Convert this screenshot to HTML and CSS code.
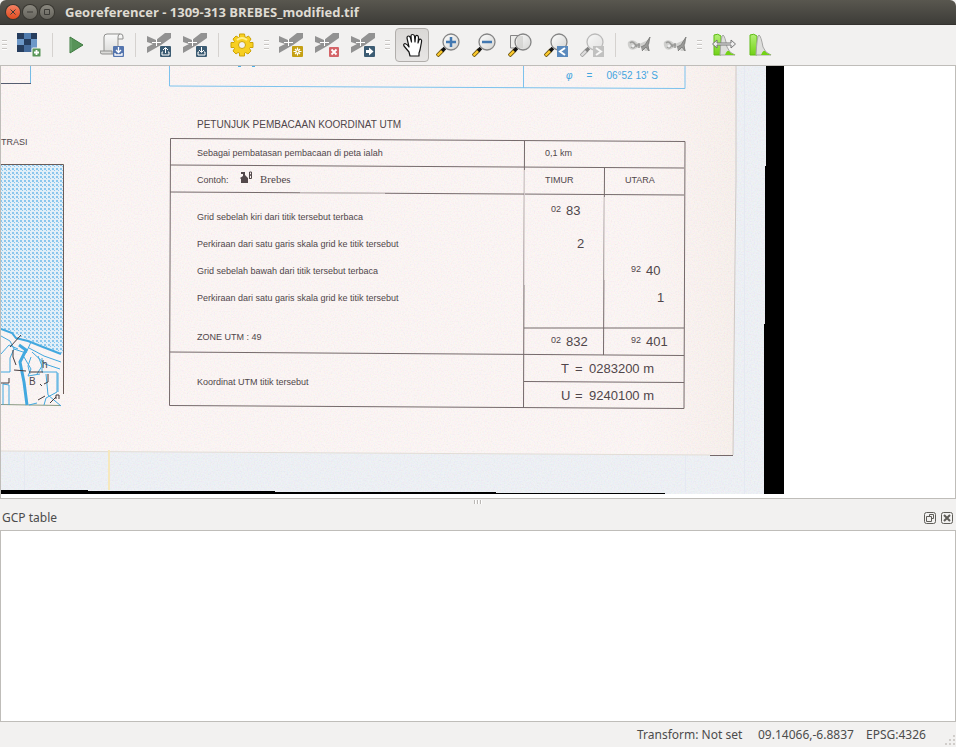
FILE: index.html
```html
<!DOCTYPE html>
<html lang="en">
<head>
<meta charset="utf-8">
<title>Georeferencer - 1309-313 BREBES_modified.tif</title>
<link rel="stylesheet" href="styles.css">
</head>
<body>
<svg class="defs" aria-hidden="true">
  <defs>
    <linearGradient id="lens" x1="0" y1="0" x2="1" y2="1"><stop offset="0" stop-color="#fff"/><stop offset="1" stop-color="#d3d3d1"/></linearGradient>
    <linearGradient id="sheetg" x1="0" y1="0" x2="0" y2="1"><stop offset="0" stop-color="#fafafa"/><stop offset="1" stop-color="#d8d8d6"/></linearGradient>
    <linearGradient id="greeng" x1="0" y1="0" x2="0" y2="1"><stop offset="0" stop-color="#b4f078"/><stop offset="1" stop-color="#73d216"/></linearGradient>
    <symbol id="point" viewBox="0 0 24 24">
      <path d="M0 3L9 7L18 0H24V5L14 12L0 20V14L6 11L0 9Z" fill="#929292"/>
      <path d="M5 9.500H14M9.500 6V13" stroke="#fff" stroke-width="1"/>
    </symbol>
    <symbol id="magnifier" viewBox="0 0 24 24">
      <path d="M1 23L7 17" stroke="#6b5514" stroke-width="4"/>
      <path d="M1.500 22.500L7 17" stroke="#fcca2c" stroke-width="2.400"/>
      <path d="M6 18L9 15" stroke="#111" stroke-width="3.500"/>
      <circle cx="15" cy="9" r="8" fill="url(#lens)" stroke="#858585" stroke-width="1.300"/>
    </symbol>
    <symbol id="linked" viewBox="0 0 24 24">
      <path d="M1 9Q4 6 8 8L12 11L19 8L23 5V10L21 13L23 18H18L15 14L10 15Q6 18 3 16Q0 13 1 9Z" fill="#cfcfcd"/>
      <path d="M3 10Q5 8 7 10T10 14M4 14Q7 16 9 12L13 12M12 10V15" fill="none" stroke="#9a9a98" stroke-width="1.500"/>
      <path d="M14 14L18 12L23 4L21 12L22 18L19 14L15 18" fill="#9a9a98" stroke="#838381"/>
      <circle cx="6" cy="13" r="1.500" fill="#eee"/>
    </symbol>
    <symbol id="histogram" viewBox="0 0 24 24">
      <path d="M2 22V2Q6 0 9 3V22Z" fill="url(#greeng)" stroke="#5ebb14"/>
      <path d="M8 22Q9 2 11 2Q13 3 15 14Q17 20 23 22Z" fill="#dededc" stroke="#a6a6a4"/>
      <path d="M13 22Q15 17 17 18Q19 21 24 22Z" fill="#73d216"/>
    </symbol>
  </defs>
</svg>

<div class="window">
  <header class="titlebar">
    <button class="wm close" aria-label="Close"><svg viewBox="0 0 14 14"><path d="M4.500 4.500L9.500 9.500M9.500 4.500L4.500 9.500"/></svg></button>
    <button class="wm" aria-label="Minimize"><svg viewBox="0 0 14 14"><path d="M4 7H10"/></svg></button>
    <button class="wm" aria-label="Maximize"><svg viewBox="0 0 14 14"><path d="M4.500 4.500H9.500V9.500H4.500Z"/></svg></button>
    <h1>Georeferencer - 1309-313 BREBES_modified.tif</h1>
  </header>

  <div class="toolbar" role="toolbar" aria-label="Georeferencer tools">
    <i class="handle"></i>
    <button class="tool" aria-label="Open raster"><svg viewBox="0 0 24 24">
      <path d="M0 0H20V19H0Z" fill="#6d98c8"/><path d="M0 0H7V6H0ZM14 0H20V6H14ZM7 6H14V12H7ZM0 12H7V19H0Z" fill="#263d5e"/><path d="M7 12H14V19H7Z" fill="#456b9b"/><path d="M7 0H14V6H7Z" fill="#507caf"/>
      <rect x="15" y="15" width="9" height="9" rx="1" fill="#599658" stroke="#f2f1f0"/><path d="M19.500 17V22M17 19.500H22" stroke="#fff" stroke-width="1.800"/></svg></button>
    <i class="sep"></i>
    <button class="tool" aria-label="Start georeferencing"><svg viewBox="0 0 24 24"><path d="M6 4L19 12L6 20Z" fill="#579358" stroke="#3f7b41" stroke-linejoin="round"/><path d="M7 5.500V18.500" stroke="#77ae78"/></svg></button>
    <button class="tool" aria-label="Generate GDAL script"><svg viewBox="0 0 24 24">
      <path d="M4 18V4Q4 1 7 1H21Q23 1 23 4V6H18V18Q18 21 15 21H2Q0 21 0 18H12V21" fill="url(#sheetg)" stroke="#8f8f8d"/><path d="M18 6V4Q18 1 20 1" fill="none" stroke="#8f8f8d"/>
      <rect x="13" y="13" width="11" height="11" rx="1" fill="#5475ae"/><path d="M18.500 14V19M16 17L18.500 19.500L21 17M15 20V22H22V20" fill="none" stroke="#fff" stroke-width="1.300"/></svg></button>
    <i class="sep"></i>
    <button class="tool" aria-label="Load GCP points"><svg viewBox="0 0 24 24"><use href="#point"/><rect x="13" y="13" width="11" height="11" rx="1" fill="#3c5c73"/><path d="M18.500 20V15M16 17L18.500 14.500L21 17M16 19H15V22H22V19H21" fill="none" stroke="#fff" stroke-width="1"/></svg></button>
    <button class="tool" aria-label="Save GCP points"><svg viewBox="0 0 24 24"><use href="#point"/><rect x="13" y="13" width="11" height="11" rx="1" fill="#3c5c73"/><path d="M18.500 14V19M16 17L18.500 19.500L21 17M16 19H15V22H22V19H21" fill="none" stroke="#fff" stroke-width="1"/></svg></button>
    <i class="sep"></i>
    <button class="tool" aria-label="Transformation settings"><svg viewBox="0 0 24 24">
      <path fill-rule="evenodd" d="M9.500 1H14.500L15 4L16 4.500L18.500 3L21 6L19.500 8.500L20 9.500H23V14.500H20L19.500 15.500L21 18L18 21L15.500 19.500L14.500 20V23H9.500V20L8 19.500L6 21L3 18L4.500 15.500L4 14.500H1V9.500H4L4.500 8.500L3 6L6 3L8.500 4.500L9.500 4Z M12 8.500A3.500 3.500 0 1 0 12 15.500A3.500 3.500 0 1 0 12 8.500Z" fill="#f7cf20" stroke="#cda306"/><path d="M7 7Q12 3 17 7" stroke="#fff08b" fill="none" stroke-width="2"/></svg></button>
    <i class="handle"></i>
    <button class="tool" aria-label="Add point"><svg viewBox="0 0 24 24"><use href="#point"/><rect x="13" y="13" width="11" height="11" rx="1" fill="#c5a013"/><path d="M18.500 14.500V22.500M14.500 18.500H22.500M16 16L21 21M21 16L16 21" stroke="#fff" stroke-width="1.200"/><circle cx="18.500" cy="18.500" r="2" fill="#fff"/><circle cx="18.500" cy="18.500" r="1" fill="#c5a013"/></svg></button>
    <button class="tool" aria-label="Delete point"><svg viewBox="0 0 24 24"><use href="#point"/><rect x="14" y="14" width="10" height="10" rx="1" fill="#d46468"/><path d="M16.500 16.500L21.500 21.500M21.500 16.500L16.500 21.500" stroke="#fff" stroke-width="1.800"/></svg></button>
    <button class="tool" aria-label="Move GCP point"><svg viewBox="0 0 24 24"><use href="#point"/><rect x="13" y="13" width="11" height="11" rx="1" fill="#3c5c73"/><path d="M15 17H18V14.500L22.500 18.500L18 22.500V20H15Z" fill="#fff"/></svg></button>
    <i class="handle"></i>
    <button class="tool pressed" aria-label="Pan" aria-pressed="true"><svg viewBox="0 0 24 24">
      <path d="M10 23L9 19L4 13Q3 11 5 10.500Q7 11 9 14L7 5Q7 3 8.500 3Q10 3 10.500 5L11.500 9L11 3Q11 1.500 12.500 1.500Q14 1.500 14.500 3L15 9L15.500 3.500Q16 2 17.500 2.500Q18.500 3 18.500 5L18 10L19 7Q20 5.500 21 6.500Q22 7 21.500 9L20 17L19 20V23Z" fill="#fff" stroke="#151515" stroke-width="1.200" stroke-linejoin="round"/></svg></button>
    <button class="tool" aria-label="Zoom in"><svg viewBox="0 0 24 24"><use href="#magnifier"/><path d="M15 4V14M10 9H20" stroke="#4278b1" stroke-width="2.500"/></svg></button>
    <button class="tool" aria-label="Zoom out"><svg viewBox="0 0 24 24"><use href="#magnifier"/><path d="M10 9H20" stroke="#4278b1" stroke-width="2.500"/></svg></button>
    <button class="tool" aria-label="Zoom to layer"><svg viewBox="0 0 24 24"><path d="M2.500 2.500H15V15H2.500Z" fill="#ededeb" stroke="#858585"/><use href="#magnifier"/><path d="M15 3V15H10Q7 9 10 3Z" fill="#c9c9c7" opacity=".6"/></svg></button>
    <button class="tool" aria-label="Zoom last"><svg viewBox="0 0 24 24"><use href="#magnifier"/><rect x="13" y="13" width="11" height="11" fill="#5b8abd"/><path d="M21 15L16 18.500L21 22" fill="none" stroke="#fff" stroke-width="2"/></svg></button>
    <button class="tool" aria-label="Zoom next" disabled><svg class="faded" viewBox="0 0 24 24"><use href="#magnifier"/><rect x="13" y="13" width="11" height="11" fill="#929292"/><path d="M16 15L21 18.500L16 22" fill="none" stroke="#fff" stroke-width="2"/></svg></button>
    <i class="sep"></i>
    <button class="tool" aria-label="Link georeferencer to QGIS" disabled><svg viewBox="0 0 24 24"><use href="#linked"/></svg></button>
    <button class="tool" aria-label="Link QGIS to georeferencer" disabled><svg viewBox="0 0 24 24"><use href="#linked"/></svg></button>
    <i class="handle"></i>
    <button class="tool" aria-label="Full histogram stretch"><svg viewBox="0 0 24 24"><use href="#histogram"/><path d="M.5 11L5 7V10H19V7L23.500 11L19 15V12H5V15Z" fill="#eee" stroke="#777"/></svg></button>
    <button class="tool" aria-label="Local histogram stretch"><svg viewBox="0 0 24 24"><use href="#histogram"/></svg></button>
  </div>

  <main class="canvas">
    <div class="sheet">
      <svg class="scan" viewBox="1 66 783 428" role="img" aria-label="Scanned map sheet">
        <defs>
          <pattern id="dots" width="4" height="4" patternUnits="userSpaceOnUse"><rect width="4" height="4" fill="#e2eff8"/><path d="M0 0H2V2H0ZM2 2H3V3H2Z" fill="#8ac6ed"/></pattern>
          <linearGradient id="edge"><stop offset="0" stop-color="#f8efec" stop-opacity="0"/><stop offset="1" stop-color="#f7efeb"/></linearGradient>
          <filter id="grain" x="0" y="0" width="1" height="1" color-interpolation-filters="sRGB"><feTurbulence type="fractalNoise" baseFrequency=".7" numOctaves="2" seed="4"/><feColorMatrix values="1 0 0 0 .4 0 1 0 0 .4 0 0 1 0 .4 0 0 0 0 .1"/></filter>
        </defs>
        <rect x="1" y="66" width="783" height="428" fill="#edf0f5"/>
        <path d="M1 66H736L733 455L1 451Z" fill="#fcf5f4"/>
        <path d="M640 66H736L733 455H640Z" fill="url(#edge)"/>
        <rect x="1" y="66" width="783" height="428" filter="url(#grain)"/>
        <path d="M736 66V180L735 260L733 455" fill="none" stroke="#cfc8c4"/>
        <path d="M1 451L710 455" stroke="#e2ddd6"/><path d="M710 455.500H733" stroke="#75686a"/>
        <path d="M109 450V490" stroke="#f6e8bd" stroke-width="2"/><path d="M24.500 452V490M685.500 456V492M744.500 66V494" stroke="#e5e9f2"/>
        <path d="M766 66H784V494H764V324H765V166H766Z"/>
        <path d="M1 490H88V491H275V492H496V493H665V494H1Z"/>
        <path d="M1 83.500H31" stroke="#555d70"/><path d="M30.500 66V83" stroke="#75bce6"/>
        <path d="M169.500 66V86L685 88.500V66M523.500 66V88" fill="none" stroke="#7cc2ed"/>
        <path d="M238 66H241M252 66H255" stroke="#4baee8" stroke-width="2"/>
        <g fill="none" stroke="#756a6b">
          <path d="M170.500 138.500L685 141.500L684 408.500L169.500 405.500Z"/>
          <path d="M170 165L684 168M170 192L684 195M170 352L684 355.500M524 328H684M524 381.500L684 382.500"/>
          <path d="M524.500 141L523.500 408M604.500 168L603.500 355"/>
        </g>
        <g stroke="#fcf5f4" opacity=".65"><path d="M524.500 170V285M604.500 197V280M300 192.800L385 193.300"/></g>
        <path d="M1 164.500H63.500V354L1 329Z" fill="url(#dots)"/>
        <path d="M1 164.500H63.500V394" fill="none" stroke="#6b5c58"/><path d="M1 404.500L61 405.500" stroke="#8a9a83"/>
        <g fill="none" stroke="#42a8df">
          <path d="M1 329L12 333L16 338L28 341L43 347L61 354" stroke-width="2"/>
          <path d="M1 336L10 341L14 349L26 353L31 342M1 354L9 345L18 349M29 348L44 356L61 362M32 352L45 364L60 369"/>
          <path d="M19 345L26 350L20 362L24 382L27 405" stroke-width="3"/>
          <path d="M1 372H10V358L14 349M3 405V384L9 385V405M24 357L31 369L28 376L40 374M42 358V372H57V392L46 398L44 405M46 374L48 395L61 406M58 373V392M29 405L37 403M31 357L28 366L30 374M38 356L42 366L37 374"/>
        </g>
        <g fill="none" stroke="#453b3d"><path d="M10 347L21 335M13 350V357L16 365M14 370L26 371M29 372H43M1 383H9V378M40 384L42 386M48 374V382L44 384M38 400L45 396M50 403L56 397M56 399V395H59V399"/></g>
      </svg>
      <span class="print region">TRASI</span>
      <span class="print letter-b">B</span>
      <span class="print letter-h">h</span>
      <div class="latitude print"><i>φ</i><span>=</span><span>06°52 13' S</span></div>
      <table class="print">
        <caption>PETUNJUK PEMBACAAN KOORDINAT UTM</caption>
        <colgroup><col class="label-col"><col class="value-col"><col class="value-col"></colgroup>
        <tbody>
          <tr class="line"><td>Sebagai pembatasan pembacaan di peta ialah</td><td class="head" colspan="2">0,1 km</td></tr>
          <tr class="line"><td>Contoh: <svg class="village" viewBox="0 0 12 13"><path d="M0 7L3 5V3H1V1H5V4L8 7V12H1V8Z" fill="#53494b"/><path d="M9.500 8V1H11.500V4H9.500M9.500 4H11.500V7.500H9.500" fill="none" stroke="#53494b"/></svg><span class="place">Brebes</span></td><td class="head">TIMUR</td><td class="head">UTARA</td></tr>
          <tr class="first"><td>Grid sebelah kiri dari titik tersebut terbaca</td><td class="num raised"><sup>02</sup>83</td><td></td></tr>
          <tr class="line"><td>Perkiraan dari satu garis skala grid ke titik tersebut</td><td class="num unit">2</td><td></td></tr>
          <tr class="line"><td>Grid sebelah bawah dari titik tersebut terbaca</td><td></td><td class="num"><sup>92</sup>40</td></tr>
          <tr class="line"><td>Perkiraan dari satu garis skala grid ke titik tersebut</td><td></td><td class="num unit">1</td></tr>
          <tr class="zone"><td>ZONE UTM : 49</td><td class="num low"><sup>02</sup>832</td><td class="num low"><sup>92</sup>401</td></tr>
          <tr class="line"><td rowspan="2">Koordinat UTM titik tersebut</td><td class="sum" colspan="2"><b>T</b><b>=</b>0283200 m</td></tr>
          <tr class="line"><td class="sum" colspan="2"><b>U</b><b>=</b>9240100 m</td></tr>
        </tbody>
      </table>
    </div>
  </main>

  <div class="splitter"><i></i></div>

  <section class="dock">
    <header>
      <h2>GCP table</h2>
      <button aria-label="Float panel"><svg viewBox="0 0 12 12"><rect x=".5" y=".5" width="11" height="11" rx="2"/><path d="M5.500 4.500V2.500H9.500V6.500H7.500M2.500 4.500H7.500V9.500H2.500Z"/></svg></button>
      <button aria-label="Close panel"><svg viewBox="0 0 12 12"><rect x=".5" y=".5" width="11" height="11" rx="2"/><path class="cross" d="M3 3L9 9M9 3L3 9"/></svg></button>
    </header>
    <div class="gcp-list"></div>
  </section>

  <footer class="status">
    <span class="transform">Transform: Not set</span>
    <span class="coords">09.14066,-6.8837</span>
    <span class="crs">EPSG:4326</span>
    <svg class="grip" viewBox="0 0 12 12"><path d="M10 0h2v2h-2zM6 4h2v2h-2zM10 4h2v2h-2zM2 8h2v2h-2zM6 8h2v2h-2zM10 8h2v2h-2z"/></svg>
  </footer>
</div>
</body>
</html>
```

FILE: styles.css
```css
* { box-sizing: border-box; }

body {
  margin: 0;
  font-family: "Noto Sans", sans-serif;
  font-size: 12px;
  color: #4c4c4c;
  background: #f2f1f0;
}

button {
  padding: 0;
  border: 0;
  background: none;
}

h1, h2 { margin: 0; }

.defs { position: absolute; width: 0; height: 0; }

.window {
  display: flex;
  flex-direction: column;
  height: 100vh;
}

/* Title bar */
.titlebar {
  display: flex;
  align-items: center;
  gap: 3px;
  flex: 0 0 25px;
  padding-left: 6px;
  background: linear-gradient(#59574f, #3d3c38);
  border-bottom: 1px solid #35322f;
  border-radius: 6px 6px 0 0;
}
.titlebar h1 {
  margin-left: 8px;
  font-family: "Open Sans", sans-serif;
  font-size: 13px;
  line-height: 24px;
  font-weight: 700;
  color: #dfdbd2;
  white-space: nowrap;
}
.wm {
  width: 14px;
  height: 14px;
  border-radius: 50%;
  background: linear-gradient(#8a887f, #66645d);
  box-shadow: 0 0 0 1px #383630;
}
.wm svg { display: block; fill: none; stroke: #3c3b37; stroke-width: 1; }
.wm.close { background: linear-gradient(#f58163, #de4b1f); }

/* Toolbar */
.toolbar {
  display: flex;
  align-items: center;
  gap: 2px;
  flex: 0 0 40px;
  margin-left: -1px;
  overflow: hidden;
}
.tool {
  display: grid;
  place-items: center;
  flex: none;
  width: 34px;
  height: 34px;
  border-radius: 4px;
}
.tool svg { width: 24px; height: 24px; }
.tool.pressed {
  border: 1px solid #b1aeab;
  background: linear-gradient(#dad8d6, #e7e5e4);
}
.faded { opacity: .5; filter: grayscale(1); }
.sep {
  flex: none;
  width: 1px;
  height: 24px;
  margin: 0 4px;
  background: #d5d2cf;
}
.handle {
  flex: none;
  width: 5px;
  height: 10px;
  margin: 0 3px;
  background: repeating-linear-gradient(#c9c6c3 0 1px, #fff 1px 2px, transparent 2px 4px);
}

/* Map canvas */
.canvas {
  position: relative;
  flex: 433 1 0;
  min-height: 0;
  overflow: hidden;
  background: #fff;
  border: 1px solid #bfbdb9;
}
.sheet {
  position: absolute;
  top: 0;
  left: 0;
  width: 783px;
}
.scan { display: block; width: 100%; }
.print {
  font-family: "Liberation Sans Narrow", "Liberation Sans", sans-serif;
  font-size: 10px;
  color: #50464a;
}
.region, .letter-b, .letter-h, .latitude { position: absolute; line-height: 14px; }
.region { top: 69px; left: 0; font-size: 9px; }
.letter-b { top: 309px; left: 28px; }
.letter-h { top: 292px; left: 41px; }
.latitude {
  display: flex;
  gap: 14px;
  top: 3px;
  left: 565px;
  color: #43a5df;
}

.sheet table {
  position: absolute;
  top: 51px;
  left: 169px;
  width: 515px;
  table-layout: fixed;
  border-collapse: collapse;
}
.sheet caption {
  height: 22px;
  padding-left: 27px;
  text-align: left;
  font-size: 10px;
  line-height: 16px;
}
.sheet td { padding: 0 0 0 27px; font-size: 9px; line-height: 14px; }
.value-col { width: 80px; }
.line { height: 27px; }
.first { height: 37px; }
.sheet .first td { vertical-align: bottom; padding-bottom: 6px; }
.sheet .first td.raised { padding-bottom: 12px; }
.zone { height: 44px; }
.sheet .zone td { padding-top: 8px; }
.sheet td.head { padding-left: 20px; font-size: 9px; }
.sheet td.num { padding-left: 26px; font-size: 13px; white-space: nowrap; }
.sheet td.unit { padding-left: 52px; }
.sheet .zone td.low { padding-top: 18px; }
.sheet sup { margin-right: 5px; font-size: 9px; line-height: 0; vertical-align: 3px; }
.sheet td.sum { padding-left: 36px; font-size: 13px; }
.sum b { display: inline-block; min-width: 13px; margin-right: 1px; font-weight: 400; }
.village { width: 12px; height: 13px; margin: -6px 8px 0 9px; vertical-align: middle; }
.place { font-family: "Liberation Serif", serif; font-size: 11px; }

/* Splitter and dock */
.splitter {
  display: grid;
  place-items: center;
  flex: 0 0 7px;
}
.splitter i {
  width: 8px;
  height: 4px;
  background: repeating-linear-gradient(90deg, #bbb8b5 0 1px, #fff 1px 2px, transparent 2px 3px);
}
.dock {
  display: flex;
  flex-direction: column;
  flex: 217 1 0;
  min-height: 0;
}
.dock header {
  display: flex;
  align-items: center;
  gap: 5px;
  flex: 0 0 24px;
  padding: 0 3px 0 2px;
}
.dock h2 { margin-right: auto; font-size: 12px; font-weight: 400; }
.dock button { width: 12px; height: 12px; }
.dock button svg { display: block; fill: none; stroke: #5f5d58; }
.dock .cross { stroke-width: 2; }
.gcp-list {
  flex: 1;
  background: #fff;
  border: 1px solid #bfbdb9;
}

/* Status bar */
.status {
  display: flex;
  align-items: center;
  justify-content: flex-end;
  flex: 0 0 25px;
  gap: 12px;
  padding-right: 1px;
  white-space: nowrap;
}
.transform { min-width: 109px; }
.coords { min-width: 96px; }
.crs { min-width: 65px; }
.grip {
  width: 12px;
  height: 12px;
  align-self: flex-end;
  fill: #d0cdca;
}
```
